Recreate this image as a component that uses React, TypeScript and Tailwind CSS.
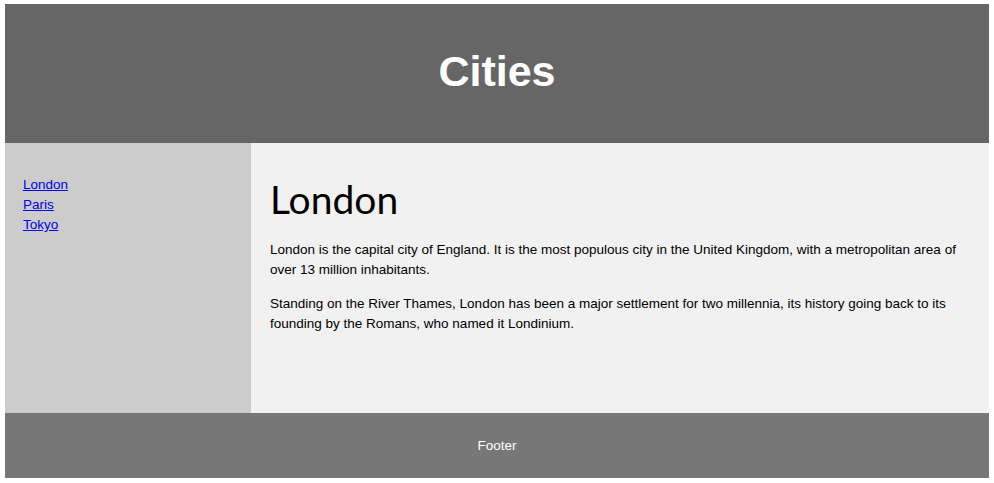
export default function App() {
  return (
    <div className="bg-white pt-1 px-[5px] pb-[5px] font-['Liberation_Sans',Arial,sans-serif]">
      <header className="h-[139px] bg-[#666] flex items-center justify-center pb-1">
        <h2 className="text-[43px] font-bold text-white leading-none">Cities</h2>
      </header>

      <section className="flex h-[270px]">
        <nav className="w-[246px] bg-[#ccc] pt-[32px] pl-[18px]">
          <ul className="text-[13.5px] leading-[20px]">
            <li>
              <a href="#" className="text-[#0000ee] underline">London</a>
            </li>
            <li>
              <a href="#" className="text-[#0000ee] underline">Paris</a>
            </li>
            <li>
              <a href="#" className="text-[#0000ee] underline">Tokyo</a>
            </li>
          </ul>
        </nav>

        <article className="flex-1 bg-[#f1f1f1] pt-[33px] px-[19px] text-black">
          <h1 className="font-['Lato',sans-serif] text-[39px] leading-[46px] mb-[18px]">London</h1>
          <p className="text-[13.5px] leading-[20px] mb-[14px]">
            London is the capital city of England. It is the most populous city in the United Kingdom, with a metropolitan area of over 13 million inhabitants.
          </p>
          <p className="text-[13.5px] leading-[20px]">
            Standing on the River Thames, London has been a major settlement for two millennia, its history going back to its founding by the Romans, who named it Londinium.
          </p>
        </article>
      </section>

      <footer className="h-[65px] bg-[#777] flex items-center justify-center pt-[2px] text-white text-[13.5px]">
        Footer
      </footer>
    </div>
  );
}
